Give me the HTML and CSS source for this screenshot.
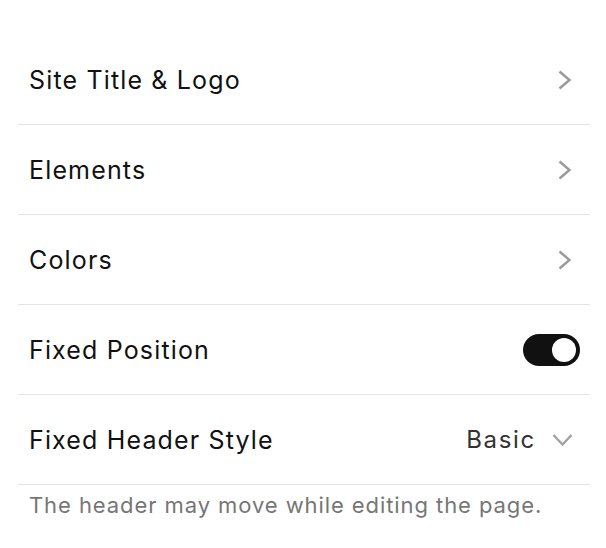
FILE: index.html
```html
<!DOCTYPE html>
<html>
<head>
<meta charset="utf-8">
<link rel="stylesheet" href="styles.css">
</head>
<body>
<div class="panel">
  <ul class="list">
    <li class="row">
      <span class="label">Site Title &amp; Logo</span>
      <svg class="chev-right" width="15" height="20" viewBox="0 0 15 20"><path d="M2.5 1.5 L12.5 10 L2.5 18.5" fill="none" stroke="#9a9a9a" stroke-width="2.4"/></svg>
    </li>
    <li class="row">
      <span class="label">Elements</span>
      <svg class="chev-right" width="15" height="20" viewBox="0 0 15 20"><path d="M2.5 1.5 L12.5 10 L2.5 18.5" fill="none" stroke="#9a9a9a" stroke-width="2.4"/></svg>
    </li>
    <li class="row">
      <span class="label">Colors</span>
      <svg class="chev-right" width="15" height="20" viewBox="0 0 15 20"><path d="M2.5 1.5 L12.5 10 L2.5 18.5" fill="none" stroke="#9a9a9a" stroke-width="2.4"/></svg>
    </li>
    <li class="row">
      <span class="label">Fixed Position</span>
      <span class="toggle"><span class="knob"></span></span>
    </li>
    <li class="row">
      <span class="label">Fixed Header Style</span>
      <span class="value">
        <span class="value-text">Basic</span>
        <svg class="chev-down" width="21" height="14" viewBox="0 0 21 14"><path d="M1.5 2 L10.5 11.5 L19.5 2" fill="none" stroke="#a3a3a3" stroke-width="2.4"/></svg>
      </span>
    </li>
  </ul>
  <p class="note">The header may move while editing the page.</p>
</div>
</body>
</html>
```
FILE: styles.css
```css
html, body {
  margin: 0;
  padding: 0;
  background: #ffffff;
}
body {
  font-family: Inter, "Liberation Sans", sans-serif;
  color: #111111;
}
.panel {
  padding: 35px 16px 0 18px;
}
.list {
  list-style: none;
  margin: 0;
  padding: 0;
}
.row {
  height: 89px;
  border-bottom: 1px solid #e4e4e4;
  display: flex;
  align-items: center;
  justify-content: space-between;
  padding: 0 18px 0 11px;
}
.label {
  font-size: 25px;
  letter-spacing: 1.15px;
}
.chev-right {
  display: block;
}
.toggle {
  width: 57px;
  height: 32px;
  border-radius: 16px;
  background: #111111;
  display: flex;
  align-items: center;
  justify-content: flex-end;
  padding-right: 4px;
  box-sizing: border-box;
  margin-right: -8px;
}
.knob {
  width: 24px;
  height: 24px;
  border-radius: 50%;
  background: #ffffff;
}
.value {
  display: flex;
  align-items: center;
  gap: 16px;
  margin-right: -1px;
}
.value-text {
  font-size: 24px;
  letter-spacing: 1.7px;
  color: #333333;
}
.chev-down {
  display: block;
}
.note {
  margin: 0;
  padding: 7px 0 0 11px;
  font-size: 22px;
  letter-spacing: 0.92px;
  color: #767676;
}
```
